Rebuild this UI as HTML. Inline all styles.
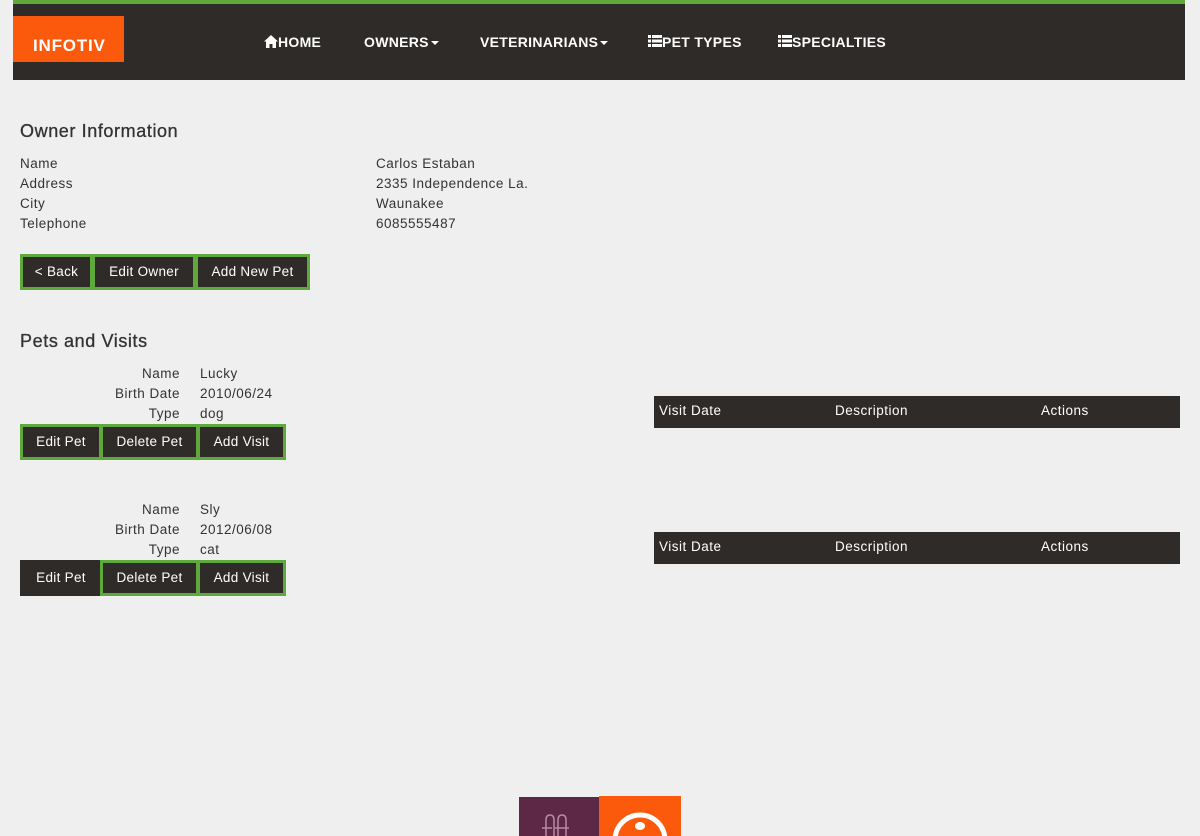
<!DOCTYPE html>
<html><head><meta charset="utf-8"><style>
*{margin:0;padding:0;box-sizing:border-box}
body{width:1200px;height:836px;background:#efefef;font-family:"Liberation Sans",sans-serif;color:#333;position:relative;overflow:hidden;font-size:13.5px;letter-spacing:.5px}
.a{position:absolute;white-space:nowrap}
.nav{position:absolute;left:13px;top:0;width:1172px;height:80px;background:#2f2b28;border-top:4px solid #5fa83b}
.logo{position:absolute;left:13px;top:16px;width:111px;height:46px;background:#fb5a0c;color:#fff;font-weight:bold;font-size:17px;padding:20px 0 0 20px;letter-spacing:.8px}
.ni{position:absolute;top:34px;color:#fff;font-weight:bold;font-size:14px;letter-spacing:.3px}
.caret{display:inline-block;width:0;height:0;border-left:4px solid transparent;border-right:4px solid transparent;border-top:4px solid #fff;vertical-align:middle;margin-left:2px}
h2{position:absolute;font-size:18px;font-weight:normal;color:#333;letter-spacing:.6px;-webkit-text-stroke:.3px #333}
.btn{position:absolute;background:#2f2b28;color:#fff;border:3px solid #5fa83b;height:36px;text-align:center;line-height:30px;font-size:13.5px;letter-spacing:.3px}
.th{position:absolute;left:654px;width:526px;height:32px;background:#2f2b28;color:#fff;font-size:13.5px}
.th span{position:absolute;top:7px}
.r{text-align:right;width:160px}
</style></head><body>
<div class="nav"></div>
<div class="logo">INFOTIV</div>
<div class="ni" style="left:264px"><svg width="14" height="13" viewBox="0 0 14 13" style="vertical-align:-1px"><path d="M7 0L0 6.5h2V13h3.5V9h3v4H12V6.5h2z" fill="#fff"/></svg>HOME</div>
<div class="ni" style="left:364px">OWNERS<span class="caret"></span></div>
<div class="ni" style="left:480px">VETERINARIANS<span class="caret"></span></div>
<div class="ni" style="left:648px"><svg width="14" height="12" viewBox="0 0 14 12" style="vertical-align:0"><g fill="#fff"><rect x="0" y="0" width="3" height="3"/><rect x="4" y="0" width="10" height="3"/><rect x="0" y="4.5" width="3" height="3"/><rect x="4" y="4.5" width="10" height="3"/><rect x="0" y="9" width="3" height="3"/><rect x="4" y="9" width="10" height="3"/></g></svg>PET TYPES</div>
<div class="ni" style="left:778px"><svg width="14" height="12" viewBox="0 0 14 12" style="vertical-align:0"><g fill="#fff"><rect x="0" y="0" width="3" height="3"/><rect x="4" y="0" width="10" height="3"/><rect x="0" y="4.5" width="3" height="3"/><rect x="4" y="4.5" width="10" height="3"/><rect x="0" y="9" width="3" height="3"/><rect x="4" y="9" width="10" height="3"/></g></svg>SPECIALTIES</div>

<h2 style="left:20px;top:121px">Owner Information</h2>
<div class="a" style="left:20px;top:154px;line-height:20px">Name<br>Address<br>City<br>Telephone</div>
<div class="a" style="left:376px;top:154px;line-height:20px">Carlos Estaban<br>2335 Independence La.<br>Waunakee<br>6085555487</div>
<div class="btn" style="left:20px;top:254px;width:73px">&lt; Back</div>
<div class="btn" style="left:92px;top:254px;width:104px">Edit Owner</div>
<div class="btn" style="left:195px;top:254px;width:115px">Add New Pet</div>

<h2 style="left:20px;top:331px">Pets and Visits</h2>
<div class="a r" style="left:20px;top:364px;line-height:20px">Name<br>Birth Date<br>Type</div>
<div class="a" style="left:200px;top:364px;line-height:20px">Lucky<br>2010/06/24<br>dog</div>
<div class="btn" style="left:20px;top:424px;width:82px">Edit Pet</div>
<div class="btn" style="left:100px;top:424px;width:99px">Delete Pet</div>
<div class="btn" style="left:197px;top:424px;width:89px">Add Visit</div>
<div class="th" style="top:396px"><span style="left:5px">Visit Date</span><span style="left:181px">Description</span><span style="left:387px">Actions</span></div>

<div class="a r" style="left:20px;top:500px;line-height:20px">Name<br>Birth Date<br>Type</div>
<div class="a" style="left:200px;top:500px;line-height:20px">Sly<br>2012/06/08<br>cat</div>
<div class="btn" style="left:20px;top:560px;width:82px;border-color:#2f2b28">Edit Pet</div>
<div class="btn" style="left:100px;top:560px;width:99px">Delete Pet</div>
<div class="btn" style="left:197px;top:560px;width:89px">Add Visit</div>
<div class="th" style="top:532px"><span style="left:5px">Visit Date</span><span style="left:181px">Description</span><span style="left:387px">Actions</span></div>

<div style="position:absolute;left:519px;top:797px;width:80px;height:39px;background:#5d2746"></div>
<svg style="position:absolute;left:538px;top:812px" width="40" height="24" viewBox="0 0 40 24"><g fill="none" stroke="#b98aa6" stroke-width="1.5"><path d="M8 8q0-5 4-5t4 5v16M8 8v16M4 16h10M20 8q0-5 4-5t4 5v16M20 8v16M17 16h14"/></g></svg>
<div style="position:absolute;left:599px;top:796px;width:82px;height:40px;background:#fb5a0c"></div>
<svg style="position:absolute;left:599px;top:796px" width="82" height="40" viewBox="0 0 82 40"><circle cx="41" cy="44" r="25" fill="none" stroke="#fff" stroke-width="5"/><ellipse cx="41" cy="30" rx="5" ry="4" fill="#fff"/></svg>
</body></html>
